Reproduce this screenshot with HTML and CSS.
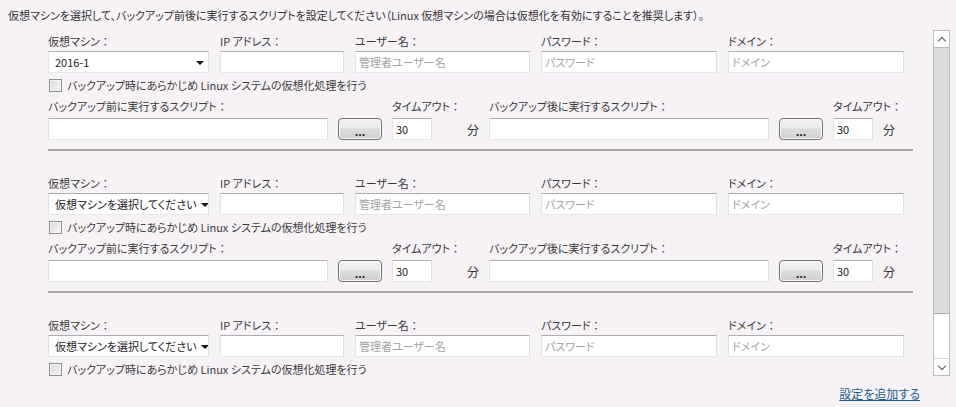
FILE: index.html
```html
<!DOCTYPE html>
<html lang="ja">

<head>
    <meta charset="UTF-8">
    <title>スクリプト設定</title>
    <link rel="stylesheet" href="styles.css">
</head>

<body>
    <p class="intro">仮想マシンを選択して、バックアップ前後に実行するスクリプトを設定してください（Linux 仮想マシンの場合は仮想化を有効にすることを推奨します）。</p>

    <div class="panel">
        <div class="list">
            <!-- group 1 -->
            <div class="group">
                <div class="vm-row">
                    <label>仮想マシン<b>：</b></label>
                    <label>IP アドレス<b>：</b></label>
                    <label>ユーザー名<b>：</b></label>
                    <label>パスワード<b>：</b></label>
                    <label>ドメイン<b>：</b></label>
                    <div class="select"><span>2016-1</span><i class="arrow"></i></div>
                    <input type="text">
                    <input type="text" placeholder="管理者ユーザー名">
                    <input type="text" placeholder="パスワード">
                    <input type="text" placeholder="ドメイン">
                </div>
                <div class="check"><span class="box"></span>バックアップ時にあらかじめ Linux システムの仮想化処理を行う</div>
                <div class="script-row">
                    <label class="span2">バックアップ前に実行するスクリプト<b>：</b></label>
                    <label class="span2">タイムアウト<b>：</b></label>
                    <label class="span2">バックアップ後に実行するスクリプト<b>：</b></label>
                    <label class="span2">タイムアウト<b>：</b></label>
                    <input type="text">
                    <button>...</button>
                    <input type="text" value="30">
                    <span class="unit right">分</span>
                    <input type="text">
                    <button>...</button>
                    <input type="text" value="30">
                    <span class="unit">分</span>
                </div>
                <div class="sep"></div>
            </div>

            <!-- group 2 -->
            <div class="group">
                <div class="vm-row">
                    <label>仮想マシン<b>：</b></label>
                    <label>IP アドレス<b>：</b></label>
                    <label>ユーザー名<b>：</b></label>
                    <label>パスワード<b>：</b></label>
                    <label>ドメイン<b>：</b></label>
                    <div class="select"><span>仮想マシンを選択してください</span><i class="arrow"></i></div>
                    <input type="text">
                    <input type="text" placeholder="管理者ユーザー名">
                    <input type="text" placeholder="パスワード">
                    <input type="text" placeholder="ドメイン">
                </div>
                <div class="check"><span class="box"></span>バックアップ時にあらかじめ Linux システムの仮想化処理を行う</div>
                <div class="script-row">
                    <label class="span2">バックアップ前に実行するスクリプト<b>：</b></label>
                    <label class="span2">タイムアウト<b>：</b></label>
                    <label class="span2">バックアップ後に実行するスクリプト<b>：</b></label>
                    <label class="span2">タイムアウト<b>：</b></label>
                    <input type="text">
                    <button>...</button>
                    <input type="text" value="30">
                    <span class="unit right">分</span>
                    <input type="text">
                    <button>...</button>
                    <input type="text" value="30">
                    <span class="unit">分</span>
                </div>
                <div class="sep"></div>
            </div>

            <!-- group 3 (rest is scrolled out of view) -->
            <div class="group">
                <div class="vm-row">
                    <label>仮想マシン<b>：</b></label>
                    <label>IP アドレス<b>：</b></label>
                    <label>ユーザー名<b>：</b></label>
                    <label>パスワード<b>：</b></label>
                    <label>ドメイン<b>：</b></label>
                    <div class="select"><span>仮想マシンを選択してください</span><i class="arrow"></i></div>
                    <input type="text">
                    <input type="text" placeholder="管理者ユーザー名">
                    <input type="text" placeholder="パスワード">
                    <input type="text" placeholder="ドメイン">
                </div>
                <div class="check"><span class="box"></span>バックアップ時にあらかじめ Linux システムの仮想化処理を行う</div>
            </div>
        </div>

        <div class="scrollbar">
            <div class="sb-btn"><i class="chev up"></i></div>
            <div class="sb-track">
                <div class="sb-thumb"></div>
            </div>
            <div class="sb-btn"><i class="chev down"></i></div>
        </div>
    </div>

    <div class="footer">
        <a href="#">設定を追加する</a>
    </div>
</body>

</html>
```

FILE: styles.css
```css
body {
    margin: 0;
    background: #f6f2f6;
    font-family: "Noto Sans CJK JP", "Noto Sans", sans-serif;
    font-size: 11px;
    font-feature-settings: "palt";
    color: #333;
}

.intro {
    margin: 0;
    padding: 7px 8px 0;
    height: 23px;
    line-height: 16px;
}

.panel {
    display: flex;
    height: 346px;
    padding-right: 6px;
}

.list {
    flex: 1;
    overflow: hidden;
    padding: 3px 0 0 48px;
}

.group label {
    display: block;
    line-height: 16px;
    height: 16px;
    color: #3a3a3a;
    white-space: nowrap;
}

/* colon keeps its full width like the original UI font */
.group label b {
    font-weight: normal;
    font-feature-settings: normal;
}

input,
.select {
    box-sizing: border-box;
    height: 22px;
    margin: 0;
    padding: 0 3px;
    font: inherit;
    color: #222;
    background: #fff;
    border: 1px solid;
    border-color: #abadb3 #dbdfe6 #e3e9ef #e2e3ea;
    outline: none;
}

input::placeholder {
    color: #a3a3a3;
}

.vm-row {
    display: grid;
    grid-template-columns: 161px 124px 175px 176px 176px;
    column-gap: 11px;
    row-gap: 2px;
}

.select {
    display: flex;
    align-items: center;
    justify-content: space-between;
    padding: 0 4px 0 6px;
    white-space: nowrap;
    overflow: hidden;
}

.select .arrow {
    flex-shrink: 0;
    border-left: 4px solid transparent;
    border-right: 4px solid transparent;
    border-top: 4px solid #111;
    margin: 1px 0 0 4px;
}

.check {
    display: flex;
    align-items: center;
    height: 18px;
    margin-top: 3px;
    color: #3a3a3a;
}

.check .box {
    box-sizing: border-box;
    width: 13px;
    height: 13px;
    margin: 0 5px 0 1px;
    border: 1px solid #8e8f8f;
    background: linear-gradient(135deg, #dcdcdc, #f4f4f4);
    box-shadow: inset 0 0 0 1px #f4f4f4;
}

.script-row {
    display: grid;
    grid-template-columns: 280px 44px 40px 37px 280px 44px 40px 20px;
    column-gap: 10px;
    row-gap: 4px;
    margin-top: 4px;
    align-items: center;
}

.span2 {
    grid-column: span 2;
}

.script-row button {
    height: 22px;
    padding: 4px 0 0;
    font: inherit;
    font-weight: bold;
    color: #222;
    border: 1px solid #707070;
    border-radius: 4px;
    background: linear-gradient(#f2f2f2, #ebebeb 45%, #dddddd 50%, #cfcfcf);
    box-shadow: inset 0 0 0 1px #fafafa;
}

.unit {
    font-size: 12px;
    color: #333;
}

.unit.right {
    text-align: right;
}

.sep {
    height: 2px;
    width: 865px;
    margin: 9px 0 24px;
    background: #a8a6a8;
}

/* fake scrollbar */
.scrollbar {
    width: 17px;
    display: flex;
    flex-direction: column;
    box-sizing: border-box;
    border: 1px solid #bcbbbc;
    background: #fff;
}

.sb-btn {
    height: 16px;
    display: flex;
    align-items: center;
    justify-content: center;
    background: #fff;
}

.sb-btn:first-child {
    border-bottom: 1px solid #bcbbbc;
}

.sb-btn:last-child {
    border-top: 1px solid #d4d4d4;
}

.chev {
    width: 5px;
    height: 5px;
    border-left: 1px solid #555;
    border-top: 1px solid #555;
}

.chev.up {
    transform: rotate(45deg);
    margin-top: 3px;
}

.chev.down {
    transform: rotate(225deg);
    margin-bottom: 3px;
}

.sb-track {
    flex: 1;
    background: #fff;
}

.sb-thumb {
    height: 266px;
    box-sizing: border-box;
    background: #dcdcdc;
    border-bottom: 1px solid #a8a8a8;
}

.footer {
    text-align: right;
    padding: 10px 36px 0 0;
    line-height: 16px;
    font-size: 12px;
}

.footer a {
    color: #1d5b89;
    text-decoration: underline;
}
```
